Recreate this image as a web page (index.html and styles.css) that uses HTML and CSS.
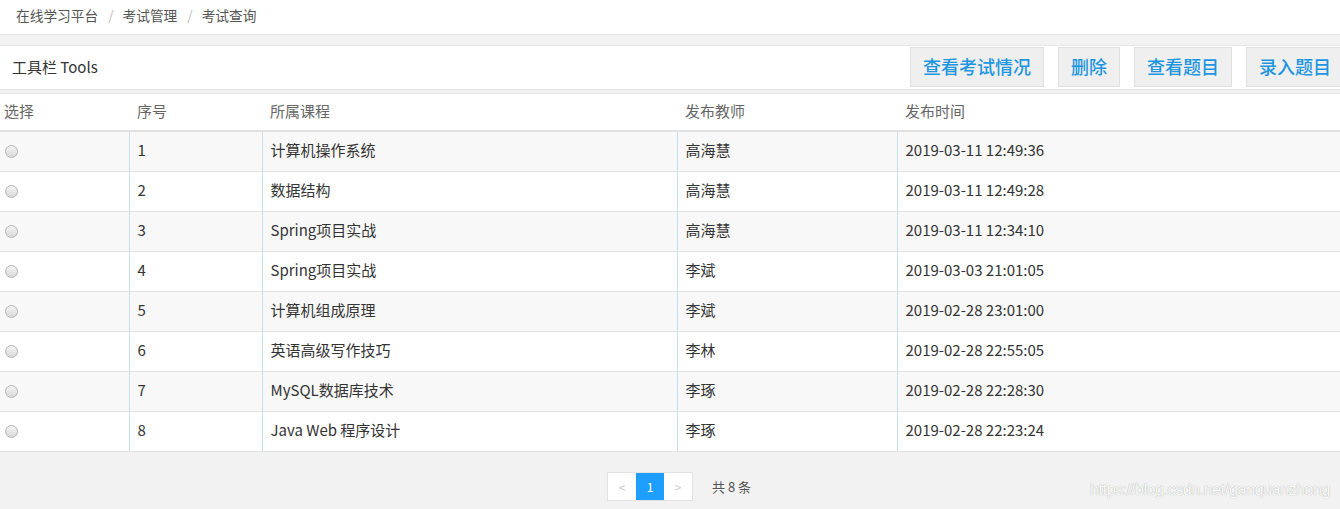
FILE: index.html
```html
<!DOCTYPE html>
<html lang="zh-CN">
<head>
  <meta charset="UTF-8">
  <title>考试查询</title>
  <link rel="stylesheet" href="styles.css">
</head>
<body>
  <!-- 面包屑 -->
  <div class="breadcrumb">
    <span>在线学习平台</span><i>/</i><span>考试管理</span><i>/</i><span>考试查询</span>
  </div>

  <!-- 工具栏 -->
  <div class="toolbar">
    <div class="toolbar-title">工具栏 Tools</div>
    <div class="toolbar-btns">
      <button>查看考试情况</button>
      <button>删除</button>
      <button>查看题目</button>
      <button>录入题目</button>
    </div>
  </div>

  <div class="table-wrap">
    <table class="grid">
      <thead>
        <tr>
          <th class="c-sel">选择</th>
          <th class="c-idx">序号</th>
          <th class="c-course">所属课程</th>
          <th class="c-teacher">发布教师</th>
          <th>发布时间</th>
        </tr>
      </thead>
      <tbody>
        <tr><td class="c-sel"><span class="radio"></span></td><td>1</td><td>计算机操作系统</td><td>高海慧</td><td>2019-03-11 12:49:36</td></tr>
        <tr><td class="c-sel"><span class="radio"></span></td><td>2</td><td>数据结构</td><td>高海慧</td><td>2019-03-11 12:49:28</td></tr>
        <tr><td class="c-sel"><span class="radio"></span></td><td>3</td><td>Spring项目实战</td><td>高海慧</td><td>2019-03-11 12:34:10</td></tr>
        <tr><td class="c-sel"><span class="radio"></span></td><td>4</td><td>Spring项目实战</td><td>李斌</td><td>2019-03-03 21:01:05</td></tr>
        <tr><td class="c-sel"><span class="radio"></span></td><td>5</td><td>计算机组成原理</td><td>李斌</td><td>2019-02-28 23:01:00</td></tr>
        <tr><td class="c-sel"><span class="radio"></span></td><td>6</td><td>英语高级写作技巧</td><td>李林</td><td>2019-02-28 22:55:05</td></tr>
        <tr><td class="c-sel"><span class="radio"></span></td><td>7</td><td>MySQL数据库技术</td><td>李琢</td><td>2019-02-28 22:28:30</td></tr>
        <tr><td class="c-sel"><span class="radio"></span></td><td>8</td><td>Java Web 程序设计</td><td>李琢</td><td>2019-02-28 22:23:24</td></tr>
      </tbody>
    </table>
  </div>

  <!-- 分页 -->
  <div class="pager">
    <div class="pages">
      <a class="disabled">&lt;</a><a class="current">1</a><a class="disabled">&gt;</a>
    </div>
    <span class="count">共 8 条</span>
  </div>

  <div class="watermark">https://blog.csdn.net/ganquanzhong</div>
</body>
</html>
```

FILE: styles.css
```css
body {
  margin: 0;
  background: #f2f2f2;
  color: #333;
  font-family: "Noto Sans CJK SC", "Liberation Sans", sans-serif;
  font-size: 14px;
  height: 509px;
  overflow: hidden;
  position: relative;
}

.breadcrumb {
  height: 34px;
  line-height: 31px;
  padding-left: 16px;
  background: #fff;
  border-bottom: 1px solid #e6e6e6;
  font-size: 13.7px;
  color: #555;
}

.breadcrumb i {
  font-style: normal;
  color: #bbb;
  margin: 0 9px 0 10px;
}

.toolbar {
  margin-top: 10px;
  height: 43px;
  background: #fff;
  border-top: 1px solid #e6e6e6;
  border-bottom: 1px solid #e2e2e2;
  display: flex;
  align-items: center;
  justify-content: space-between;
  overflow: hidden;
}

.toolbar-title {
  padding-left: 12px;
  padding-bottom: 2px;
  font-size: 15px;
  color: #333;
}

.toolbar-btns {
  display: flex;
  gap: 14px;
  align-self: flex-start;
  margin-top: 1px;
  margin-right: -4px;
}

.toolbar-btns button {
  height: 40px;
  padding: 0 12px 2px;
  background: #efefef;
  border: 1px solid #e0e0e0;
  color: #1e95df;
  font-family: "Noto Sans CJK SC", sans-serif;
  font-size: 18px;
  font-weight: 500;
}

.table-wrap {
  margin-top: 3px;
  background: #fff;
  border-top: 1px solid #e6e6e6;
  font-size: 15px;
}

.grid {
  width: 100%;
  border-collapse: collapse;
  table-layout: fixed;
}

.grid th {
  height: 33px;
  text-align: left;
  font-weight: normal;
  color: #666;
  padding: 0 8px 3px;
  border-bottom: 2px solid #e2e2e2;
}

.grid td {
  height: 35px;
  padding: 0 8px 4px;
  border-bottom: 1px solid #e2e2e2;
  border-left: 1px solid #c7e0f0;
}

.grid td:first-child {
  border-left: none;
}

.grid tbody tr:nth-child(odd) {
  background: #f8f8f8;
}

.grid .c-sel { width: 113px; padding-left: 4px; }
.grid th.c-sel { width: 117px; }
.grid .c-idx { width: 117px; }
.grid .c-course { width: 399px; }
.grid .c-teacher { width: 204px; }

.radio {
  display: inline-block;
  width: 11px;
  height: 11px;
  border-radius: 50%;
  border: 1px solid #b5b5b5;
  background: linear-gradient(#f4f4f4, #d8d8d8);
  vertical-align: middle;
  margin-left: 1px;
}

.pager {
  display: flex;
  align-items: center;
  padding: 20px 0 0 607px;
}

.pages {
  display: flex;
  border: 1px solid #e2e2e2;
  background: #fff;
}

.pages a {
  width: 28px;
  height: 27px;
  line-height: 27px;
  text-align: center;
  font-size: 12px;
  color: #ccc;
}

.pages a.current {
  background: #1e9fff;
  color: #fff;
}

.count {
  margin-left: 19px;
  color: #555;
  font-size: 13px;
}

/* 水印 */
.watermark {
  position: absolute;
  right: 10px;
  bottom: 10px;
  color: #fafafa;
  text-shadow: 0 0 1px #999;
  font-family: "Liberation Sans", sans-serif;
  font-size: 16px;
  letter-spacing: -0.4px;
}
```
